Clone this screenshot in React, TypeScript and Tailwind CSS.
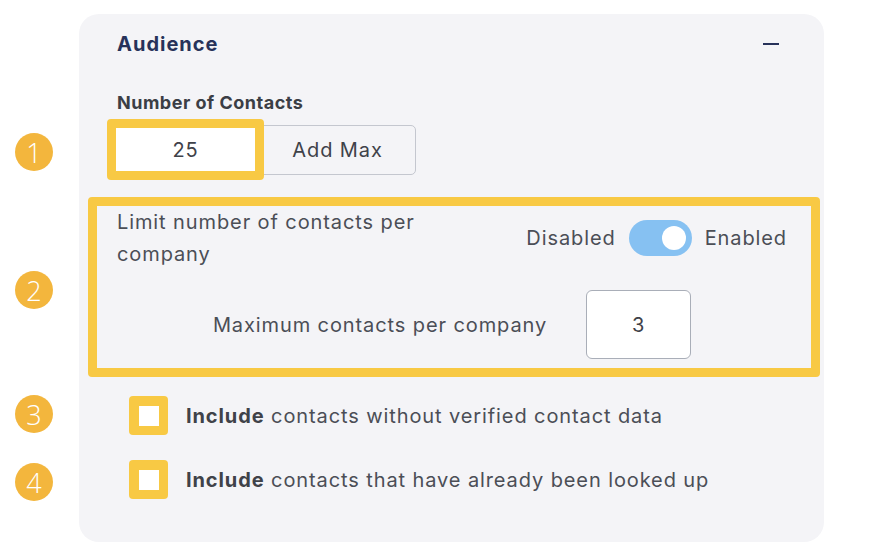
import React from 'react';

const Badge = ({ n, className }: { n: number; className: string }) => (
  <div
    className={`absolute w-[38px] h-[38px] rounded-full bg-[#f3b63d] flex items-center justify-center text-white text-[27px] font-light leading-none font-['Open_Sans',sans-serif] ${className}`}
  >
    {n}
  </div>
);

const Checkbox = ({ children }: { children: React.ReactNode }) => (
  <div className="flex items-center gap-[18px]">
    <div className="w-[39px] h-[39px] rounded-[4px] bg-[#f8c944] flex items-center justify-center">
      <div className="w-[20px] h-[20px] bg-white" />
    </div>
    <span className="text-[20px] tracking-[0.9px] text-[#4b4e56]">{children}</span>
  </div>
);

export default function App() {
  return (
    <div className="relative w-[874px] h-[556px] bg-white font-['Inter',sans-serif] overflow-hidden">
      <Badge n={1} className="left-[15px] top-[133px]" />
      <Badge n={2} className="left-[15px] top-[271px]" />
      <Badge n={3} className="left-[15px] top-[395px]" />
      <Badge n={4} className="left-[15px] top-[463px]" />

      <div className="absolute left-[79px] top-[14px] w-[745px] h-[528px] rounded-[20px] bg-[#f4f4f7] pt-[16px] pl-[38px] pr-[44px]">
        <div className="flex items-center justify-between h-[28px]">
          <h2 className="text-[20px] tracking-[1px] font-bold text-[#27325a] leading-[28px]">Audience</h2>
          <div className="w-[16px] h-[2px] bg-[#27325a] mr-[1px]" />
        </div>

        <div className="mt-[33px] text-[18px] tracking-[0.5px] font-bold text-[#3b3e45] leading-[24px]">Number of Contacts</div>

        <div className="mt-[4px] -ml-[10px] flex items-center">
          <div className="relative z-10 w-[157px] h-[61px] border-[9px] border-[#f8c944] rounded-[4px] bg-white flex items-center justify-center text-[20px] tracking-[0.9px] text-[#3f4249]">
            25
          </div>
          <button className="-ml-[9px] w-[161px] h-[50px] border border-[#c4c7cf] rounded-r-[5px] bg-[#f4f4f7] text-[20px] tracking-[0.9px] text-[#3f4249] pl-[4px]">
            Add Max
          </button>
        </div>

        <div className="mt-[17px] -ml-[29px] -mr-[40px] border-[9px] border-[#f8c944] rounded-[4px] pl-[20px] pr-[24px] pb-[9px] text-[20px] tracking-[0.9px] text-[#4b4e56]">
          <div className="flex items-center justify-between">
            <div className="w-[330px] leading-[32px]">Limit number of contacts per company</div>
            <div className="flex items-center gap-[13px]">
              <span>Disabled</span>
              <div className="w-[63px] h-[36px] rounded-full bg-[#86c1f2] flex items-center justify-end pr-[6px]">
                <div className="w-[24px] h-[24px] rounded-full bg-white" />
              </div>
              <span>Enabled</span>
            </div>
          </div>
          <div className="mt-[20px] flex items-center justify-center gap-[39px]">
            <span>Maximum contacts per company</span>
            <div className="w-[105px] h-[69px] bg-white border border-[#a9aeb8] rounded-[6px] flex items-center justify-center text-[#3f4249]">
              3
            </div>
          </div>
        </div>

        <div className="mt-[19px] ml-[12px] flex flex-col gap-[25px]">
          <Checkbox>
            <b className="font-bold text-[#3f4249]">Include</b> contacts without verified contact data
          </Checkbox>
          <Checkbox>
            <b className="font-bold text-[#3f4249]">Include</b> contacts that have already been looked up
          </Checkbox>
        </div>
      </div>
    </div>
  );
}
